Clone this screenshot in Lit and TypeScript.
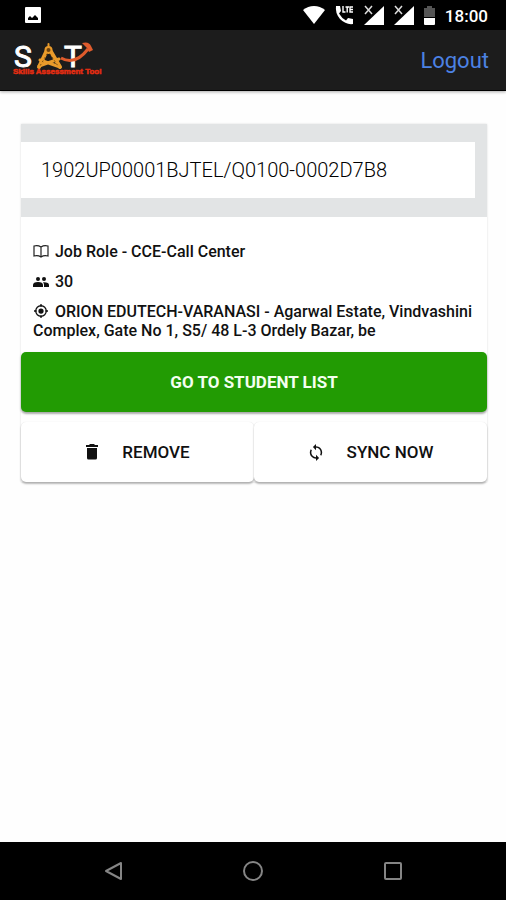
import { LitElement, html, css, svg } from "lit";
import { customElement, property } from "lit/decorators.js";

@customElement("status-bar")
export class StatusBar extends LitElement {
  @property() time = "";

  static styles = css`
    :host {
      display: flex;
      align-items: center;
      justify-content: space-between;
      height: 30px;
      padding: 0 18px 0 25px;
      background: #000;
      color: #fff;
    }
    svg {
      display: block;
      fill: #fff;
    }
    .right {
      display: flex;
      align-items: center;
      gap: 10px;
    }
    .time {
      font: 500 17px/30px Roboto, sans-serif;
      padding-top: 2px;
    }
  `;

  private signal() {
    return html`<svg width="20" height="20" viewBox="0 0 20 20" aria-hidden="true">
      ${svg`<path d="M20 1V20H0L10 10.500Z" />
        <path d="M0 0H10V10H0Z" fill="#000" />
        <path d="M1 1L8 9M8 1L1 9" stroke="#ddd" stroke-width="1.5" fill="none" />`}
    </svg>`;
  }

  render() {
    return html`
      <svg width="16" height="16" viewBox="0 0 16 16" aria-hidden="true">
        <rect width="16" height="16" rx="1" />
        <path d="M3 13V11L5 9L7 11L10 8L13 11V13Z" fill="#000" />
      </svg>
      <div class="right">
        <svg width="22" height="18" viewBox="0 0 22 18" aria-hidden="true">
          <path d="M11 18L0 4Q5 0 11 0T22 4Z" />
        </svg>
        <svg width="19" height="20" viewBox="0 0 19 20" aria-hidden="true">
          <path d="M1 1H5L6 6L4 8.500Q6.500 13 11 15.500L13 13L18 14V19Q11 20 5 14Q0 8 1 1Z" />
          <path d="M8 1V7H10.500M10.500 2H14M12.200 2V7.500M18 2H15V7H18M15 4.500H18" stroke="#fff" stroke-width="1.400" fill="none" />
        </svg>
        ${this.signal()} ${this.signal()}
        <svg width="11" height="20" viewBox="0 0 11 20" aria-hidden="true">
          <path d="M3 1H8V3H11V12H0V3H3Z" fill="#555" />
          <path d="M0 13H11V19Q11 20 10 20H1Q0 20 0 19Z" />
        </svg>
        <span class="time">${this.time}</span>
      </div>
    `;
  }
}

@customElement("app-header")
export class AppHeader extends LitElement {
  static styles = css`
    :host {
      display: flex;
      align-items: center;
      justify-content: space-between;
      height: 61px;
      padding: 0 17px 0 13px;
      background: #1c1c1c;
      border-bottom: 1px solid #000;
      box-sizing: border-box;
      box-shadow: 0 1px 3px #0005;
      font-family: Roboto, sans-serif;
    }
    svg {
      display: block;
    }
    .letter {
      font: 30px Roboto, sans-serif;
      fill: #fff;
      stroke: #fff;
      stroke-width: 1;
    }
    .tag {
      font: 700 8px "Liberation Sans", sans-serif;
      fill: #e52d12;
      stroke: #e52d12;
      stroke-width: 0.5;
    }
    a {
      color: #4c82e4;
      font-size: 22px;
      text-decoration: none;
    }
  `;

  render() {
    return html`
      <svg width="90" height="48" viewBox="0 -6 90 48" role="img" aria-label="SAT Skills Assessment Tool">
        <text class="letter" x="1" y="25">S</text>
        <g fill="none" stroke="#e99b2b" stroke-linecap="round">
          <path d="M34 8L26 25M37 8L47 25" stroke-width="4" />
          <path d="M27 18L47 25M46 17L26 24" stroke-width="3" />
          <circle cx="35.500" cy="8" r="3" stroke-width="2" fill="#70430c" />
          <path d="M35.500 2V5" stroke-width="2" />
          <path d="M34 12L27 24M37 12L45 24" stroke="#80500f" stroke-width="1" stroke-dasharray="1 3" />
        </g>
        <text class="letter" x="51" y="25">T</text>
        <path d="M48 16Q62 24 75 7" fill="none" stroke="#df5b2c" stroke-width="3" />
        <path d="M69 1Q76 -1 78 4L80 8L76 10L74 6Z" fill="#df5b2c" />
        <text class="tag" x="0" y="32">Skills Assessment Tool</text>
      </svg>
      <a href="#logout">Logout</a>
    `;
  }
}

@customElement("batch-card")
export class BatchCard extends LitElement {
  @property() code = "";
  @property() role = "";
  @property() count = "";
  @property() centre = "";

  static styles = css`
    :host {
      display: block;
      font-family: Roboto, sans-serif;
      color: #111;
      box-shadow: 0 0 2px #0002;
    }
    .head {
      padding: 18px 12px 19px 0;
      background: #e2e4e5;
    }
    h2 {
      margin: 0;
      padding: 0 20px;
      background: #fff;
      color: #000;
      font-size: 20px;
      line-height: 56px;
      font-weight: 300;
    }
    .info {
      padding: 25px 0 12px 12px;
      background: #fff;
      font-size: 16px;
      line-height: 19px;
      font-weight: 500;
    }
    p {
      margin: 0 0 11px;
    }
    p:last-child {
      margin: 0;
    }
    p svg {
      vertical-align: -1px;
      margin-right: 2px;
    }
    button {
      display: flex;
      align-items: center;
      justify-content: center;
      width: 100%;
      height: 60px;
      padding: 0;
      border: 0;
      border-radius: 5px;
      background: #fff;
      color: #111;
      font: 500 17px Roboto, sans-serif;
      box-shadow: 0 2px 2px #0004, 0 1px 3px #0002;
    }
    .primary {
      background: #229b03;
      color: #f4fff0;
      font-weight: 700;
    }
    .pair {
      display: grid;
      grid-template-columns: 1fr 1fr;
      padding-top: 10px;
    }
    .pair button {
      gap: 23px;
      box-shadow: 0 2px 2px #0004, 0 0 1px #0002;
    }
  `;

  render() {
    return html`
      <div class="head"><h2>${this.code}</h2></div>
      <div class="info">
        <p>
          <svg width="16" height="13" viewBox="0 0 16 13" fill="none" stroke="#222" stroke-width="1.200" aria-hidden="true">
            <path d="M8 2Q5 0 1 1V11Q5 10 8 12Q11 10 15 11V1Q11 0 8 2V12" />
          </svg>
          Job Role - ${this.role}
        </p>
        <p>
          <svg width="16" height="12" viewBox="0 0 16 12" fill="#111" aria-hidden="true">
            <circle cx="5" cy="3" r="2" />
            <circle cx="11" cy="3" r="2" />
            <path d="M0 11V9Q0 6 5 6T10 9V11ZM11 11V9Q11 7.500 10 6.300Q16 6 16 9V11Z" />
          </svg>
          ${this.count}
        </p>
        <p>
          <svg width="16" height="14" viewBox="0 0 16 16" fill="none" stroke="#111" stroke-width="1.500" aria-hidden="true">
            <circle cx="8" cy="8" r="6" />
            <circle cx="8" cy="8" r="3" fill="#111" stroke="none" />
            <path d="M8 0V3M8 13V16M0 8H3M13 8H16" />
          </svg>
          ${this.centre}
        </p>
      </div>
      <button class="primary" type="button">GO TO STUDENT LIST</button>
      <div class="pair">
        <button type="button">
          <svg width="14" height="16" viewBox="0 0 14 16" fill="#111" aria-hidden="true">
            <path d="M1 1H4L5 0H9L10 1H13V3H1ZM2 4H12V14Q12 15.500 10.500 15.500H3.500Q2 15.500 2 14Z" />
          </svg>
          REMOVE
        </button>
        <button type="button">
          <svg width="16" height="17" viewBox="2 1 20 22" fill="#111" aria-hidden="true">
            <path d="M12 4V1L8 5l4 4V6c3.310 0 6 2.690 6 6 0 1.010-.25 1.970-.7 2.800l1.460 1.460C19.540 15.030 20 13.570 20 12c0-4.420-3.580-8-8-8zm0 14c-3.310 0-6-2.690-6-6 0-1.010.25-1.970.7-2.800L5.240 7.740C4.460 8.970 4 10.430 4 12c0 4.420 3.580 8 8 8v3l4-4-4-4v3z" />
          </svg>
          SYNC NOW
        </button>
      </div>
    `;
  }
}

@customElement("nav-bar")
export class NavBar extends LitElement {
  static styles = css`
    :host {
      display: flex;
      align-items: center;
      justify-content: center;
      gap: 120px;
      height: 58px;
      background: #000;
    }
    button {
      padding: 0;
      border: 0;
      background: none;
    }
    svg {
      display: block;
      fill: none;
      stroke: #858585;
      stroke-width: 2;
      stroke-linejoin: round;
    }
  `;

  render() {
    return html`
      <button type="button" aria-label="Back">
        <svg width="20" height="20" viewBox="0 0 20 20"><path d="M18 2V18L3 10Z" /></svg>
      </button>
      <button type="button" aria-label="Home">
        <svg width="20" height="20" viewBox="0 0 20 20"><circle cx="10" cy="10" r="9" /></svg>
      </button>
      <button type="button" aria-label="Recent apps">
        <svg width="20" height="20" viewBox="0 0 20 20"><rect x="2" y="2" width="16" height="16" rx="1" /></svg>
      </button>
    `;
  }
}

@customElement("app-root")
export class AppRoot extends LitElement {
  static styles = css`
    :host {
      display: flex;
      flex-direction: column;
      min-height: 100vh;
      background: #fefefe;
    }
    main {
      flex: 1;
      padding: 33px 19px 33px 21px;
    }
  `;

  render() {
    return html`
      <status-bar time="18:00"></status-bar>
      <app-header></app-header>
      <main>
        <batch-card
          code="1902UP00001BJTEL/Q0100-0002D7B8"
          role="CCE-Call Center"
          count="30"
          centre="ORION EDUTECH-VARANASI - Agarwal Estate, Vindvashini Complex, Gate No 1, S5/ 48 L-3 Ordely Bazar, be"
        ></batch-card>
      </main>
      <nav-bar></nav-bar>
    `;
  }
}
